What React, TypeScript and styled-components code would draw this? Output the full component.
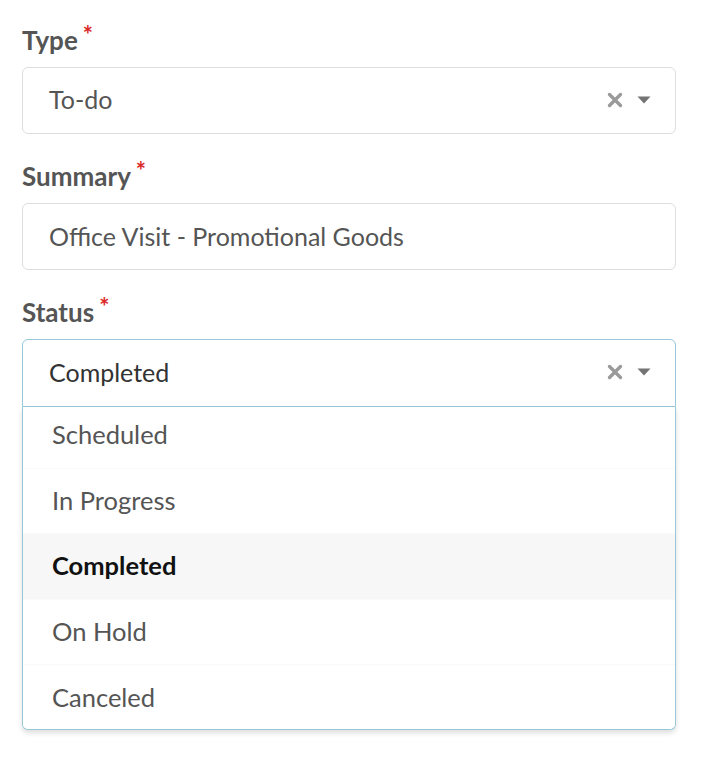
import React, { useEffect, useRef } from "react";
import styled, { createGlobalStyle } from "styled-components";

const GlobalStyle = createGlobalStyle`
  html, body {
    margin: 0;
    padding: 0;
    background: #ffffff;
    min-height: 100vh;
  }
  #root {
    min-height: 100vh;
  }
  body {
    font-family: Lato, "Open Sans", "Liberation Sans", sans-serif;
  }
`;

const Form = styled.form`
  width: 654px;
  padding: 24px 0 0 22px;
`;

const Field = styled.div`
  margin-bottom: 26px;
  position: relative;
`;

const Label = styled.label`
  display: block;
  font-size: 26px;
  font-weight: 700;
  line-height: 33px;
  color: #555555;
  margin-bottom: 10px;
`;

const Required = styled.span`
  color: #db2828;
  font-size: 24px;
  font-weight: 700;
  line-height: 1;
  vertical-align: top;
  margin-left: 5px;
  position: relative;
  top: -1px;
`;

const Box = styled.div<{ $open?: boolean }>`
  box-sizing: border-box;
  height: ${(p) => (p.$open ? "68px" : "67px")};
  display: flex;
  align-items: center;
  padding: 0 24px 3px 26px;
  border: 1px solid ${(p) => (p.$open ? "#96c8da" : "#dedede")};
  border-radius: ${(p) => (p.$open ? "6px 6px 0 0" : "6px")};
  background: #ffffff;
  font-size: 25px;
`;

const Value = styled.span<{ $dark?: boolean }>`
  flex: 1;
  color: ${(p) => (p.$dark ? "#333333" : "#555555")};
`;

const Icons = styled.div`
  display: flex;
  align-items: center;
  gap: 14px;
  margin-top: 1px;
`;

const Anchor = styled.div`
  position: relative;
`;

const Menu = styled.div`
  position: absolute;
  left: 0;
  right: 0;
  top: 100%;
  height: 323px;
  overflow: hidden;
  box-sizing: border-box;
  background: #ffffff;
  border: 1px solid #96c8da;
  border-top: none;
  border-radius: 0 0 6px 6px;
  box-shadow: 0 3px 5px 0 rgba(34, 36, 38, 0.15);
  z-index: 2;
`;

const Item = styled.div<{ $selected?: boolean }>`
  box-sizing: border-box;
  height: 65.6px;
  flex-shrink: 0;
  display: flex;
  align-items: center;
  padding: 0 0 2px 29px;
  font-size: 25.5px;
  border-top: 1px solid #fafafa;
  color: ${(p) => (p.$selected ? "#111111" : "#555555")};
  font-weight: ${(p) => (p.$selected ? 700 : 400)};
  background: ${(p) => (p.$selected ? "#f7f7f7" : "#ffffff")};

  &:first-child {
    border-top: none;
  }
`;

const Input = styled.input`
  box-sizing: border-box;
  display: block;
  width: 100%;
  height: 67px;
  padding: 0 26px 2px;
  border: 1px solid #dedede;
  border-radius: 6px;
  font-family: inherit;
  font-size: 25px;
  color: #555555;
  outline: none;
`;

const Clear = () => (
  <svg width="16" height="16" viewBox="0 0 16 16">
    <path d="M2.5 2.5 L13.5 13.5 M13.5 2.5 L2.5 13.5" stroke="#9a9a9a" strokeWidth="3.4" strokeLinecap="round" />
  </svg>
);

const Caret = () => (
  <svg width="14" height="8" viewBox="0 0 14 8">
    <path d="M0.5 0.5 L13.5 0.5 L7 7.5 Z" fill="#737373" />
  </svg>
);

const statuses = ["Scheduled", "In Progress", "Completed", "On Hold", "Canceled"];

export default function App() {
  const menuRef = useRef<HTMLDivElement>(null);

  useEffect(() => {
    if (menuRef.current) menuRef.current.scrollTop = 5;
  }, []);

  return (
    <>
      <GlobalStyle />
      <Form>
        <Field>
          <Label>
            Type<Required>*</Required>
          </Label>
          <Box>
            <Value>To-do</Value>
            <Icons>
              <Clear />
              <Caret />
            </Icons>
          </Box>
        </Field>

        <Field>
          <Label>
            Summary<Required>*</Required>
          </Label>
          <Input defaultValue="Office Visit - Promotional Goods" />
        </Field>

        <Field>
          <Label>
            Status<Required>*</Required>
          </Label>
          <Anchor>
            <Box $open>
              <Value $dark>Completed</Value>
              <Icons>
                <Clear />
                <Caret />
              </Icons>
            </Box>
            <Menu ref={menuRef}>
              {statuses.map((s) => (
                <Item key={s} $selected={s === "Completed"}>
                  {s}
                </Item>
              ))}
            </Menu>
          </Anchor>
        </Field>
      </Form>
    </>
  );
}
